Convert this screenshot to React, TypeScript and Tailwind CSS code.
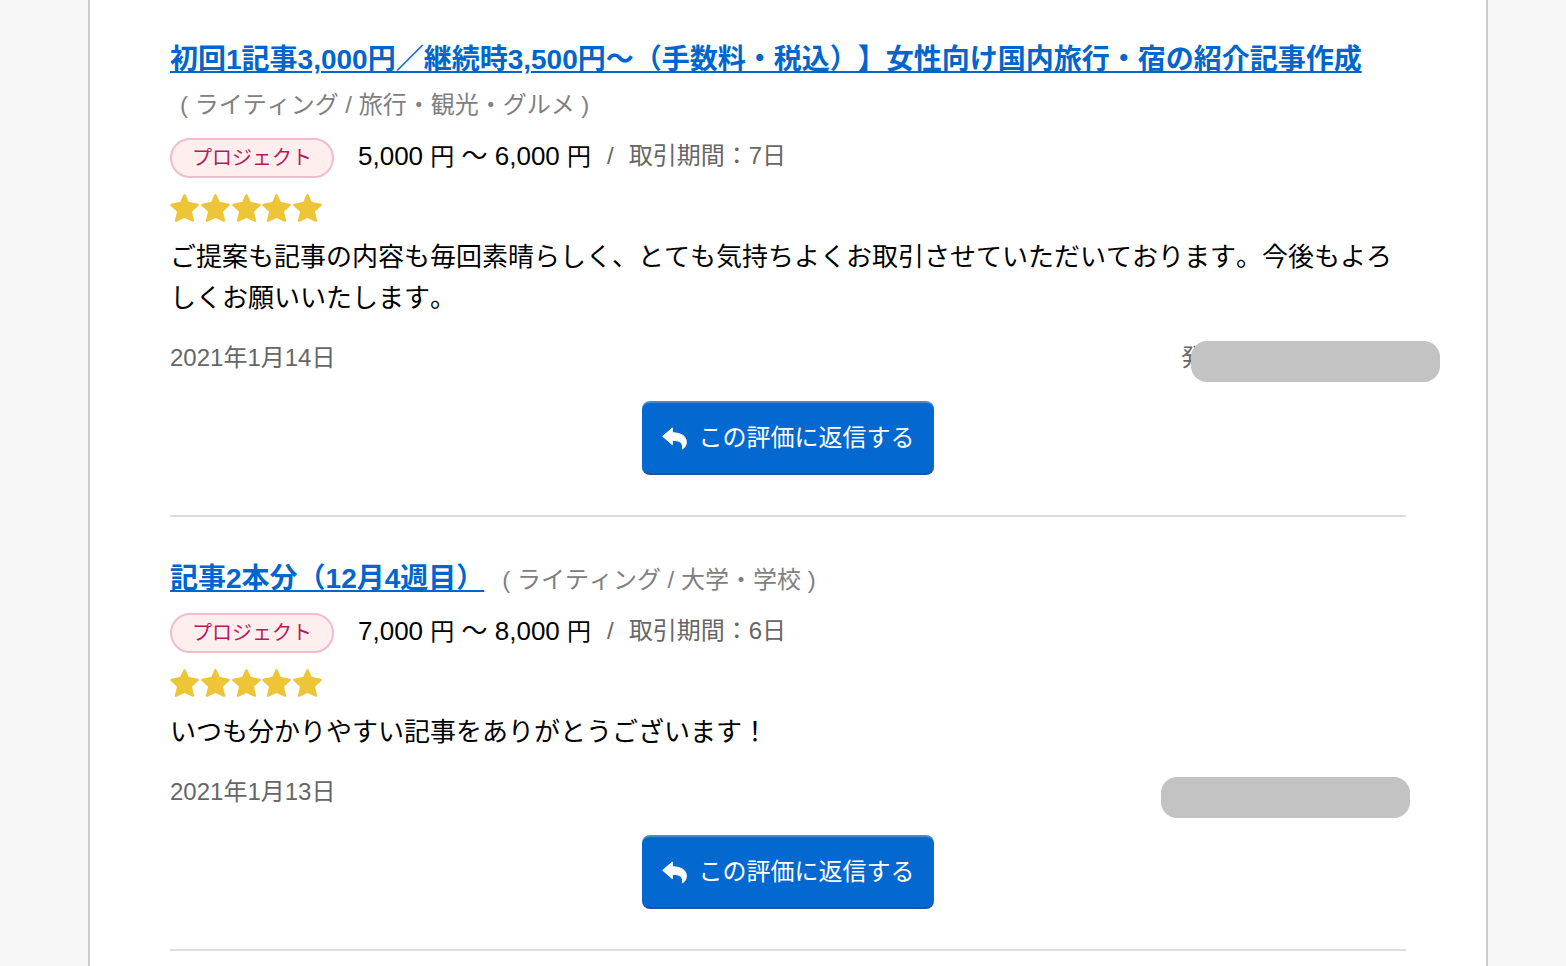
interface Review {
  title: string
  category: string
  min: string
  max: string
  days: string
  comment: string
  date: string
  client?: string
  maskClass: string
}

const reviews: Review[] = [
  {
    title: '初回1記事3,000円／継続時3,500円〜（手数料・税込）】女性向け国内旅行・宿の紹介記事作成',
    category: '( ライティング / 旅行・観光・グルメ )',
    min: '5,000',
    max: '6,000',
    days: '7日',
    comment:
      'ご提案も記事の内容も毎回素晴らしく、とても気持ちよくお取引させていただいております。今後もよろしくお願いいたします。',
    date: '2021年1月14日',
    client: '発',
    maskClass: 'top-[3px] -right-[34px]',
  },
  {
    title: '記事2本分（12月4週目）',
    category: '( ライティング / 大学・学校 )',
    min: '7,000',
    max: '8,000',
    days: '6日',
    comment: 'いつも分かりやすい記事をありがとうございます！',
    date: '2021年1月13日',
    maskClass: 'top-[5px] -right-1',
  },
]

function StarIcon() {
  return (
    <svg viewBox="0 0 87 84" className="h-7 w-[29px]" fill="currentColor" stroke="currentColor" strokeWidth="7" strokeLinejoin="round" aria-hidden="true">
      <path d="M43.5 4 54 27 83 33 62 52 69 80 43.5 68 18 80 25 52 4 33 33 27Z" />
    </svg>
  )
}

function ReplyIcon() {
  return (
    <svg viewBox="0 0 75 69" className="h-[23px] w-[25px]" fill="currentColor" stroke="currentColor" strokeWidth="3" strokeLinejoin="round" aria-hidden="true">
      <path d="M2 28 31 3V17C56 18 73 26 73 45C73 56 68 62 61 66C64 49 56 40 31 40V53Z" />
    </svg>
  )
}

function Stars() {
  return (
    <div role="img" aria-label="5つ星" className="mt-4 flex h-7 w-[152px] justify-between text-[#edc537]">
      {[1, 2, 3, 4, 5].map((n) => (
        <StarIcon key={n} />
      ))}
    </div>
  )
}

function ReviewItem({ review }: { review: Review }) {
  return (
    <article className="border-b-2 border-[#ddd] pt-[39px] pb-10 first:pt-[37px]">
      <div className="flex flex-wrap items-baseline gap-x-2 leading-[45px]">
        <h2 className="text-[28px] font-bold">
          <a href="#" className="text-[#0066cc] underline">{review.title}</a>
        </h2>
        <span className="pl-[10px] text-2xl leading-[45px] text-[#808080]">{review.category}</span>
      </div>

      <div className="mt-[11px] flex h-10 items-start text-2xl leading-9 text-[#666]">
        <span className="flex h-10 w-[164px] items-center justify-center rounded-full border-2 border-[#f1bdce] bg-[#ffeeee] text-xl text-[#b7195a]">
          プロジェクト
        </span>
        <span className="ml-6 text-[26px] leading-9 text-black">
          {review.min} <span className="text-2xl leading-9">円</span> 〜 {review.max}{' '}
          <span className="text-2xl leading-9">円</span>
        </span>
        <span className="ml-4">/</span>
        <span className="ml-[15px]">取引期間：{review.days}</span>
      </div>

      <Stars />
      <p className="mt-[15px] text-[26px] leading-[41px]">{review.comment}</p>

      <div className="relative mt-[19px] flex h-10 items-center justify-between text-2xl text-[#666]">
        <time>{review.date}</time>
        {review.client && <span className="w-[225px]">{review.client}</span>}
        {/* 発注者名は非公開 */}
        <span className={`absolute h-[41px] w-[249px] rounded-2xl bg-[#c3c3c3] ${review.maskClass}`} />
      </div>

      <button
        type="button"
        className="mx-auto mt-[23px] flex h-[74px] w-[292px] items-center justify-center gap-3 rounded-lg border-y-2 border-t-[#4a8bcf] border-b-[#1c559c] bg-[#0368cf] text-2xl text-white"
      >
        <ReplyIcon />
        この評価に返信する
      </button>
    </article>
  )
}

export default function App() {
  return (
    <div className="min-h-screen bg-[#f7f7f7] pr-[78px] pl-[88px] font-['Liberation_Sans','Noto_Sans_CJK_JP',sans-serif] text-black [font-kerning:none] [text-spacing-trim:space-all]">
      <main className="min-h-screen border-x-2 border-[#ccc] bg-white px-20">
        {reviews.map((review) => (
          <ReviewItem key={review.title} review={review} />
        ))}
      </main>
    </div>
  )
}
